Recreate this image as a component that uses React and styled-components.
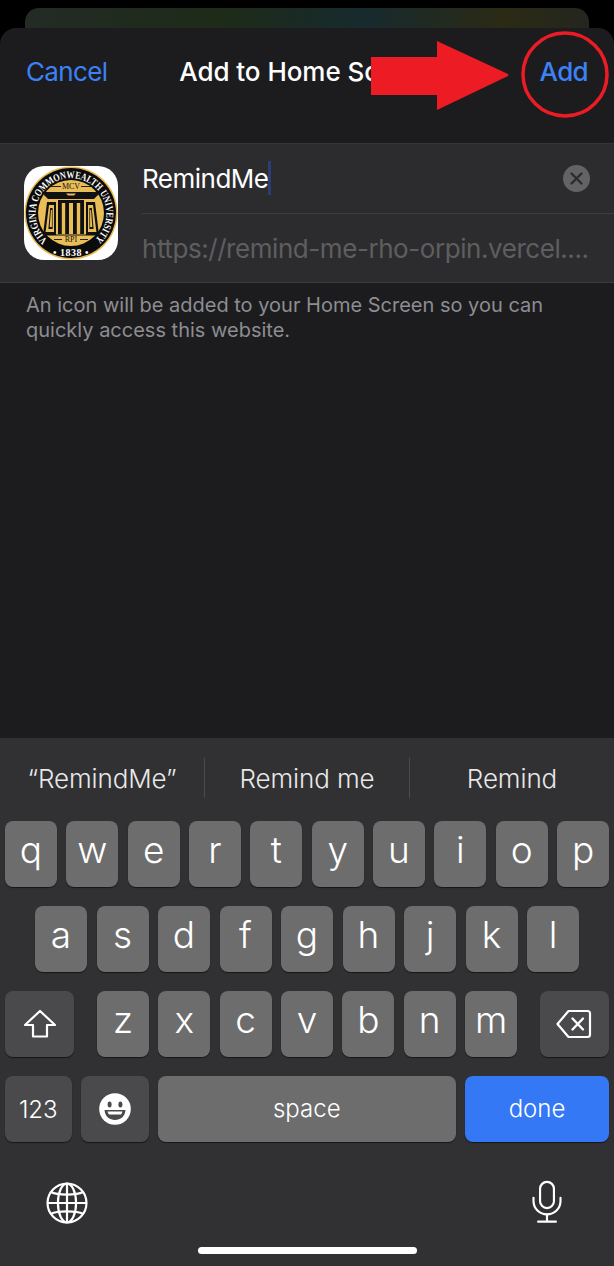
import React from "react";
import styled, { createGlobalStyle } from "styled-components";

const Global = createGlobalStyle`
  html, body { margin: 0; padding: 0; background: #000; }
  body { font-family: Inter, "Liberation Sans", sans-serif; -webkit-font-smoothing: antialiased; }
`;

const Page = styled.div`
  position: relative;
  width: 614px;
  height: 1266px;
  overflow: hidden;
  display: flex;
  flex-direction: column;
  background: #000;
`;
const Peek = styled.div`
  height: 20px;
  margin: 8px 25px 0;
  border-radius: 14px 14px 0 0;
  background: linear-gradient(90deg, #232b25 0%, #1d2b18 35%, #172a2e 60%, #2b2a15 85%, #24261f 100%);
  flex: none;
`;
const Sheet = styled.div`
  height: 710px;
  flex: none;
  background: #1c1c1e;
  border-radius: 16px 16px 0 0;
`;
const Header = styled.header`
  height: 115px;
  padding: 0 26px 28px;
  box-sizing: border-box;
  display: grid;
  grid-template-columns: 1fr auto 1fr;
  align-items: center;
  font-size: 26px;
  letter-spacing: -0.65px;
`;
const NavButton = styled.span`
  color: #3b82f6;
  font-weight: ${(p) => (p.$strong ? 500 : 400)};
  justify-self: ${(p) => (p.$strong ? "end" : "start")};
`;
const Title = styled.span`
  color: #fff;
  font-weight: 500;
  letter-spacing: -0.05px;
  white-space: nowrap;
`;
const Table = styled.section`
  height: 140px;
  box-sizing: border-box;
  background: #2c2c2e;
  border-top: 1px solid #363638;
  border-bottom: 1px solid #3c3c3e;
  display: flex;
  align-items: center;
  padding-left: 24px;
`;
const AppIcon = styled.svg`
  width: 94px;
  height: 94px;
  flex: none;
  margin-right: 24px;
`;
const Fields = styled.div`
  flex: 1;
  min-width: 0;
  display: flex;
  flex-direction: column;
`;
const NameField = styled.div`
  height: 70px;
  box-sizing: border-box;
  padding: 0 24px 0 0;
  display: flex;
  align-items: center;
  color: #fff;
  font-size: 26px;
  letter-spacing: -0.5px;
  border-bottom: 1px solid #3c3c3e;
`;
const Caret = styled.span`
  width: 3px;
  height: 34px;
  background: #2a3d75;
  margin-left: -1px;
`;
const Clear = styled.svg`
  width: 27px;
  height: 27px;
  margin-left: auto;
`;
const UrlField = styled.div`
  height: 69px;
  display: flex;
  align-items: center;
  color: #5e5e60;
  font-size: 26px;
  letter-spacing: -0.44px;
  white-space: nowrap;
`;
const Note = styled.p`
  margin: 10px 26px 0;
  color: #8d8d92;
  font-size: 20px;
  line-height: 25px;
  letter-spacing: 0;
`;
const Keyboard = styled.div`
  flex: 1;
  background: #313133;
  display: flex;
  flex-direction: column;
`;
const Suggestions = styled.div`
  height: 83px;
  flex: none;
  display: grid;
  grid-template-columns: 204px 1fr 205px;
  align-items: center;
  color: #e8e8e9;
  font-size: 26px;
  font-weight: 300;
  letter-spacing: -0.1px;
`;
const Suggestion = styled.div`
  height: 40px;
  display: flex;
  align-items: center;
  justify-content: center;
  box-sizing: border-box;
  margin-top: -3px;
  border-left: ${(p) => (p.$divided ? "1px solid #4b4b4d" : "none")};
`;
const Rows = styled.div`
  display: flex;
  flex-direction: column;
  gap: 19px;
  padding: 0 5px;
`;
const Row = styled.div`
  display: grid;
  height: 66px;
  grid-template-columns: ${(p) => p.$cols};
  column-gap: ${(p) => p.$gap || "9.4px"};
  padding: ${(p) => p.$pad || "0"};
`;
const Key = styled.div`
  display: flex;
  align-items: center;
  justify-content: center;
  border-radius: 8px;
  background: ${(p) => (p.$accent ? "#3478f6" : p.$dark ? "#4a4a4c" : "#6d6d6e")};
  box-shadow: 0 1px 1px rgba(0, 0, 0, 0.55);
  color: #fff;
  font-size: ${(p) => p.$size || "37px"};
  font-weight: 300;
  padding-bottom: ${(p) => p.$lift || "9px"};
  box-sizing: border-box;
`;
const Gap = styled.div``;
const Bottom = styled.div`
  height: 125px;
  position: relative;
  display: flex;
  justify-content: space-between;
  align-items: flex-start;
  padding: 38px 52px 0 46px;
  box-sizing: border-box;
`;
const GlobeSvg = styled.svg`
  display: block;
  margin-top: 2px;
`;
const MicSvg = styled.svg`
  display: block;
`;
const HomeBar = styled.div`
  position: absolute;
  left: 198px;
  bottom: 13px;
  width: 219px;
  height: 7px;
  border-radius: 4px;
  background: #fff;
`;
const Annotation = styled.svg`
  position: absolute;
  left: 0;
  top: 0;
  width: 614px;
  height: 130px;
  pointer-events: none;
`;

const Seal = () => (
  <AppIcon viewBox="0 0 94 94">
    <defs>
      <path id="arcTop" d="M 23.5 74 A 35.4 35.4 0 1 1 70.5 74" />
    </defs>
    <rect width="94" height="94" rx="20" fill="#fff" />
    <circle cx="47" cy="47" r="46.5" fill="#e6b84f" />
    <circle cx="47" cy="47" r="45" fill="#0b0b0b" />
    <circle cx="47" cy="47" r="33" fill="#e9bd58" />
    <text fontFamily="'Liberation Serif', serif" fontSize="10.4" fontWeight="700" fill="#fff">
      <textPath href="#arcTop" textLength="170" lengthAdjust="spacingAndGlyphs">VIRGINIA COMMONWEALTH UNIVERSITY</textPath>
    </text>
    <text x="47" y="89.5" textAnchor="middle" fontFamily="'Liberation Serif', serif" fontSize="10" fontWeight="700" fill="#fff" letterSpacing="0.5">• 1838 •</text>
    <text x="47" y="23" textAnchor="middle" fontFamily="'Liberation Serif', serif" fontSize="8" fill="#111">MCV</text>
    <text x="47" y="76" textAnchor="middle" fontFamily="'Liberation Serif', serif" fontSize="8" fill="#111">RPI</text>
    <path d="M27 20.5h10M57 20.5h10M30 73.5h8M56 73.5h8" stroke="#111" strokeWidth="0.9" />
    <path d="M20 26h54v3l-4 4H24l-4-4z" fill="#111" />
    <path d="M42 27.5h10l-2 2h-6z" fill="#e9bd58" />
    <path d="M23 36h9v33H19zM62 36h9l4 33H62z" fill="#111" />
    <path d="M25 39h5v27h-8.4zM64 39h5l3.4 27H64z" fill="#e9bd58" />
    <path d="M26.2 42h2.4v21h-4.2zM65.4 42h2.4l1.8 21h-4.2z" fill="#111" />
    <path d="M26.9 44h1v17h-2.2zM66.1 44h1l1.2 17h-2.2z" fill="#e9bd58" />
    <path d="M34 34h26v3H34z" fill="#111" />
    <path d="M34 37h3.8v31H34zM41.2 37H45v31h-3.8zM49 37h3.8v31H49zM56.2 37H60v31h-3.8z" fill="#111" />
    <path d="M19 68.4h56v1.2H19z" fill="#111" />
  </AppIcon>
);

const ShiftIcon = () => (
  <svg width="34" height="30" viewBox="0 0 34 30" fill="none" stroke="#fff" strokeWidth="2.2" strokeLinejoin="round">
    <path d="M17 2 L32 16 H24 V27.5 H10 V16 H2 Z" />
  </svg>
);
const BackspaceIcon = () => (
  <svg width="36" height="30" viewBox="0 0 36 30" fill="none" stroke="#fff" strokeWidth="2.2" strokeLinejoin="round" strokeLinecap="round">
    <path d="M12.5 2 H31.5 Q34 2 34 4.5 V25.5 Q34 28 31.5 28 H12.5 L1.5 15 Z" />
    <path d="M16.5 9.5 L27 20.5 M27 9.5 L16.5 20.5" strokeWidth="2.4" />
  </svg>
);
const EmojiIcon = () => (
  <svg width="32" height="32" viewBox="0 0 32 32">
    <circle cx="16" cy="16" r="15.8" fill="#fff" />
    <ellipse cx="10.6" cy="11.5" rx="2" ry="3" fill="#4a4a4c" />
    <ellipse cx="21.4" cy="11.5" rx="2" ry="3" fill="#4a4a4c" />
    <path d="M5.5 17 H26.5 C26 23.5 21.5 27 16 27 C10.5 27 6 23.5 5.5 17 Z" fill="#4a4a4c" />
    <path d="M8.5 18.6 H23.5 C23 20 22.5 21 22 21.4 H10 C9.5 21 9 20 8.5 18.6 Z" fill="#fff" />
  </svg>
);
const GlobeIcon = () => (
  <GlobeSvg width="42" height="42" viewBox="0 0 44 44" fill="none" stroke="#fff" strokeWidth="2.3">
    <circle cx="22" cy="22" r="20.4" />
    <ellipse cx="22" cy="22" rx="9.5" ry="20.4" />
    <path d="M22 1.6 V42.4 M1.6 22 H42.4" />
    <path d="M5 10.5 C12 14 32 14 39 10.5 M5 33.5 C12 30 32 30 39 33.5" />
  </GlobeSvg>
);
const MicIcon = () => (
  <MicSvg width="30" height="44" viewBox="0 0 32 46" fill="none" stroke="#fff" strokeWidth="2.3" strokeLinecap="round">
    <rect x="8.6" y="1.5" width="14.8" height="28" rx="7.4" />
    <path d="M1.6 18.5 V22 C1.6 30 8 36.2 16 36.2 C24 36.2 30.4 30 30.4 22 V18.5" />
    <path d="M16 36.2 V44 M6.5 44 H25.5" />
  </MicSvg>
);

const letters = (s) => s.split("").map((c) => <Key key={c}>{c}</Key>);

export default function App() {
  return (
    <Page>
      <Global />
      <Peek />
      <Sheet>
        <Header>
          <NavButton>Cancel</NavButton>
          <Title>Add to Home Screen</Title>
          <NavButton $strong>Add</NavButton>
        </Header>
        <Table>
          <Seal />
          <Fields>
            <NameField>
              RemindMe<Caret />
              <Clear viewBox="0 0 27 27">
                <circle cx="13.5" cy="13.5" r="13.5" fill="#636366" />
                <path d="M8.5 8.5 L18.5 18.5 M18.5 8.5 L8.5 18.5" stroke="#2c2c2e" strokeWidth="2.4" strokeLinecap="round" />
              </Clear>
            </NameField>
            <UrlField>https://remind-me-rho-orpin.vercel....</UrlField>
          </Fields>
        </Table>
        <Note>An icon will be added to your Home Screen so you can quickly access this website.</Note>
      </Sheet>
      <Keyboard>
        <Suggestions>
          <Suggestion>“RemindMe”</Suggestion>
          <Suggestion $divided>Remind me</Suggestion>
          <Suggestion $divided>Remind</Suggestion>
        </Suggestions>
        <Rows>
          <Row $cols="repeat(10, 1fr)">{letters("qwertyuiop")}</Row>
          <Row $cols="repeat(9, 1fr)" $gap="9.5px" $pad="0 30px">{letters("asdfghjkl")}</Row>
          <Row $cols="69px 4.2px repeat(7, 1fr) 4.2px 69px">
            <Key $dark $lift="0"><ShiftIcon /></Key>
            <Gap />
            {letters("zxcvbnm")}
            <Gap />
            <Key $dark $lift="0"><BackspaceIcon /></Key>
          </Row>
          <Row $cols="66.5px 67.7px 1fr 144px">
            <Key $dark $size="24px" $lift="0">123</Key>
            <Key $dark $lift="0"><EmojiIcon /></Key>
            <Key $size="24px" $lift="2px">space</Key>
            <Key $accent $size="24px" $lift="2px">done</Key>
          </Row>
        </Rows>
        <Bottom>
          <GlobeIcon />
          <MicIcon />
          <HomeBar />
        </Bottom>
      </Keyboard>
      <Annotation viewBox="0 0 614 130">
        <path d="M371 57 H437 V41 L508 74 Q509 75 508 76 L437 110 V95 H371 Z" fill="#ed1c24" />
        <ellipse cx="565" cy="74.5" rx="42" ry="41.5" fill="none" stroke="#ed1c24" strokeWidth="3.5" />
      </Annotation>
    </Page>
  );
}
